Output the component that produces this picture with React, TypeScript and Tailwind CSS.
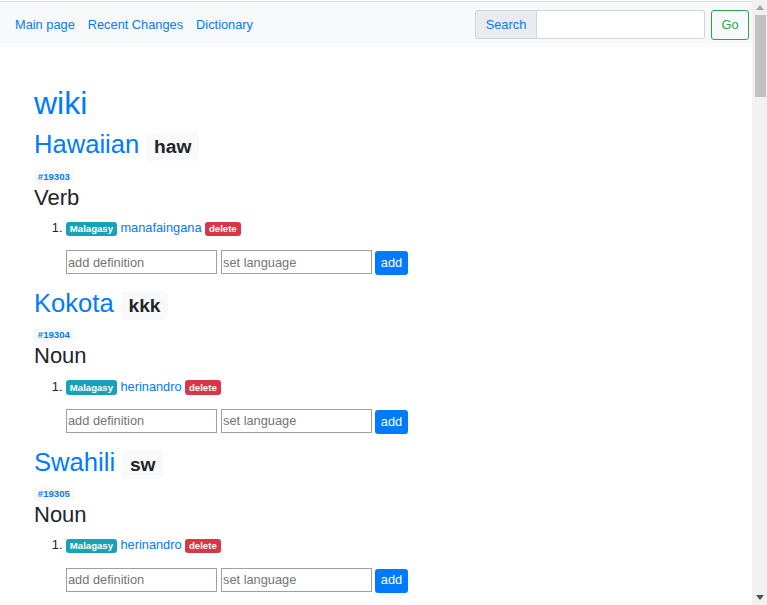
import React from "react";

type Entry = { lang: string; code: string; id: number; pos: string; tag: string; word: string };

const entries: Entry[] = [
  { lang: "Hawaiian", code: "haw", id: 19303, pos: "Verb", tag: "Malagasy", word: "manafaingana" },
  { lang: "Kokota", code: "kkk", id: 19304, pos: "Noun", tag: "Malagasy", word: "herinandro" },
  { lang: "Swahili", code: "sw", id: 19305, pos: "Noun", tag: "Malagasy", word: "herinandro" },
];

function EntryBlock({ e }: { e: Entry }) {
  return (
    <div>
      <h2 className="text-[25.6px] leading-[1.2] mb-2 text-[#007bff] font-normal">
        {e.lang}{" "}
        <span className="inline-block bg-[#f8f9fa] text-[#212529] font-bold text-[19.2px] leading-none px-[0.4em] py-[0.25em] rounded-[4px]">
          {e.code}
        </span>
      </h2>
      <div className="flex mt-px">
        <span className="inline-block bg-[#f8f9fa] text-[#007bff] font-bold text-[9.6px] leading-none px-[0.4em] py-[0.25em] rounded-[3px]">
          #{e.id}
        </span>
      </div>
      <h3 className="text-[22px] leading-[1.2] mt-px mb-[7px] text-[#212529] font-normal">{e.pos}</h3>
      <ol className="list-decimal pl-[32px] mb-[12.7px] text-[12.8px] leading-[1.5]">
        <li>
          <span className="inline-block bg-[#17a2b8] text-white font-bold text-[9.6px] leading-none px-[0.4em] py-[0.25em] rounded-[3px]">
            {e.tag}
          </span>{" "}
          <a className="text-[#007bff]" href="#">
            {e.word}
          </a>{" "}
          <span className="inline-block bg-[#dc3545] text-white font-bold text-[9.6px] leading-none px-[0.4em] py-[0.25em] rounded-[3px]">
            delete
          </span>
          <div className="flex items-start mt-[13px]">
            <input
              className="w-[151px] h-[24px] border border-[#a0a0a0] px-[1px] text-[12.8px] placeholder:text-[#757575] bg-white outline-none"
              placeholder="add definition"
            />
            <input
              className="ml-[4px] w-[151px] h-[24px] border border-[#a0a0a0] px-[1px] text-[12.8px] placeholder:text-[#757575] bg-white outline-none"
              placeholder="set language"
            />
            <button className="ml-[3px] mt-[1px] h-[24px] w-[33px] bg-[#007bff] text-white text-[12.8px] rounded-[3px] leading-none">
              add
            </button>
          </div>
        </li>
      </ol>
    </div>
  );
}

function Scrollbar() {
  return (
    <div className="w-[15px] h-[605px] shrink-0 bg-[#f1f1f1] flex flex-col">
      <div className="h-[15px] flex items-center justify-center">
        <svg width="8" height="5" viewBox="0 0 8 5">
          <polygon points="0,5 8,5 4,0" fill="#a3a3a3" />
        </svg>
      </div>
      <div className="ml-[3px] w-[11px] h-[82px] bg-[#c1c1c1]" />
      <div className="flex-1" />
      <div className="h-[15px] flex items-center justify-center">
        <svg width="8" height="5" viewBox="0 0 8 5">
          <polygon points="0,0 8,0 4,5" fill="#505050" />
        </svg>
      </div>
    </div>
  );
}

export default function App() {
  return (
    <div className="flex h-[605px] overflow-hidden bg-white text-[#212529]" style={{ fontFamily: '"Liberation Sans", Arial, sans-serif' }}>
      <div className="flex-1 min-w-0 h-[605px] overflow-hidden">
        <div className="h-px bg-white" />
        <nav className="h-[46px] border-t border-[#dcdcdc] bg-[#f8f9fa] flex items-center pl-[15px] pr-[3px] text-[12.8px]">
          <div className="flex gap-[13px] text-[#007bff]">
            <a href="#">Main page</a>
            <a href="#">Recent Changes</a>
            <a href="#">Dictionary</a>
          </div>
          <div className="ml-auto flex items-center">
            <div className="flex">
              <span className="h-[29px] w-[62px] flex items-center justify-center bg-[#e9ecef] border border-[#ced4da] rounded-l-[3px] text-[#007bff]">
                Search
              </span>
              <input className="h-[29px] w-[168px] border border-l-0 border-[#ced4da] rounded-r-[3px] bg-white outline-none px-2" />
            </div>
            <button className="ml-[6px] h-[30px] w-[38px] border border-[#28a745] rounded-[3px] text-[#28a745] flex items-center justify-center">
              Go
            </button>
          </div>
        </nav>
        <main className="px-[34px] pt-[37px]">
          <h1 className="text-[32px] leading-[1.2] mb-[7px] text-[#007bff] font-normal">wiki</h1>
          {entries.map((e) => (
            <EntryBlock key={e.id} e={e} />
          ))}
        </main>
      </div>
      <Scrollbar />
    </div>
  );
}
